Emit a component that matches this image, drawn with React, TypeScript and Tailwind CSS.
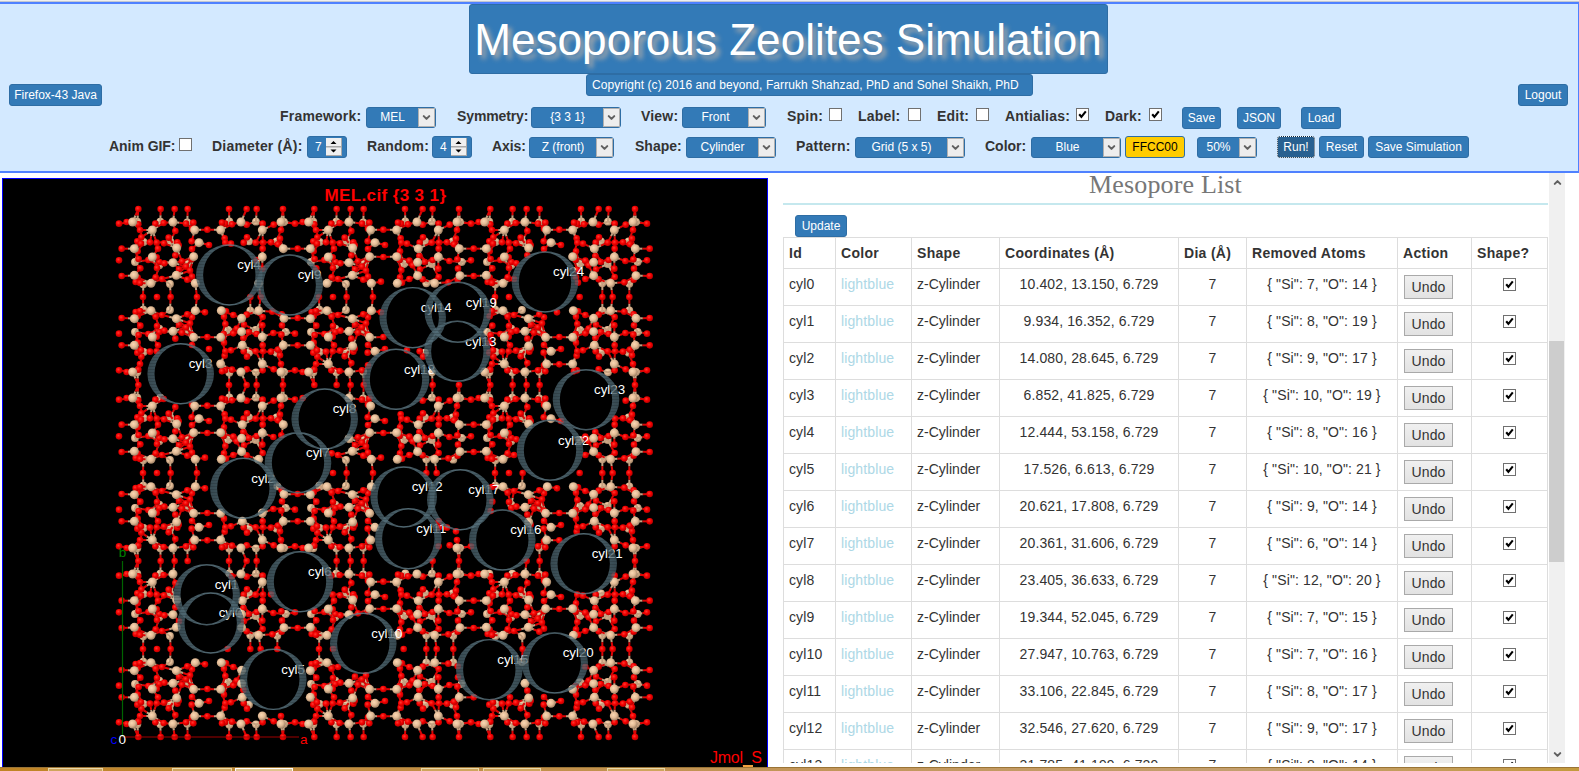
import React from 'react';
import { ChevronDown, ChevronUp } from 'lucide-react';

type Pt = [number, number];

/* ---------- lattice data (three units per screen pixel) ---------- */
const CELL = 528;
const MIRROR_Y = 351;

const siBack: Pt[] = [
  [112, 125], [181, 125], [262, 127], [388, 124], [468, 125], [552, 126],
  [131, 186], [211, 184], [447, 184], [530, 184],
  [178, 256], [262, 252], [384, 252], [467, 252], [557, 246], [105, 246],
  [130, 313], [210, 312], [451, 310], [532, 311],
];
const siFront: Pt[] = [
  [98, 126], [219, 126], [157, 150], [284, 150], [362, 150], [423, 126], [487, 150], [543, 126],
  [297, 188], [103, 206], [230, 204], [427, 206], [550, 206],
  [157, 231], [281, 230], [362, 230], [487, 231],
  [219, 248], [425, 247],
  [103, 286], [229, 286], [425, 287], [552, 287],
  [153, 310], [286, 310], [364, 310], [476, 310],
];
const oxygen: Pt[] = [
  [57, 131], [115, 133], [80, 126], [166, 131], [191, 129], [258, 131], [280, 128],
  [120, 150], [226, 153], [276, 146], [322, 149],
  [375, 131], [396, 133], [366, 128], [440, 134], [488, 131], [521, 134], [543, 150],
  [124, 172], [112, 184], [123, 191], [150, 187], [170, 188], [192, 190], [206, 173], [232, 187], [236, 196],
  [275, 184], [327, 195],
  [374, 175], [376, 188], [393, 191], [441, 172], [431, 188], [467, 188], [489, 188], [513, 187], [540, 176], [534, 193],
  [65, 206], [113, 214], [174, 206], [276, 207], [372, 214], [488, 206],
  [322, 231], [116, 237], [145, 240], [178, 246], [193, 250], [170, 232],
  [57, 241], [246, 244], [275, 238], [226, 226], [258, 260],
  [371, 240], [400, 242], [410, 256], [446, 246], [470, 240], [520, 243], [544, 238], [430, 228],
  [121, 265], [171, 264], [237, 268], [270, 272], [376, 270], [432, 268], [487, 266], [546, 266],
  [65, 288], [113, 293], [167, 292], [186, 297], [276, 290], [262, 299],
  [372, 292], [440, 298], [488, 291], [517, 307], [545, 299], [400, 297],
  [107, 306], [120, 309], [315, 305], [378, 308],
];
const topRow = [115, 182, 224, 263, 387, 440, 470, 549];
const midRow = [129, 171, 212, 291, 383, 451, 482, 532];

const cylinders: [string, number, number][] = [
  ['cyl0', 210.7, 623], ['cyl1', 206.7, 594.7], ['cyl2', 243.3, 488.3], ['cyl3', 180.7, 373.7],
  ['cyl4', 229.3, 275], ['cyl5', 273.3, 679.3], ['cyl6', 300, 581.7], ['cyl7', 298, 462.7],
  ['cyl8', 324.7, 419], ['cyl9', 289.7, 285], ['cyl10', 363.3, 643.3], ['cyl11', 408.3, 538.7],
  ['cyl12', 403.7, 497], ['cyl13', 457.3, 351.3], ['cyl14', 412.7, 317.7], ['cyl15', 489.3, 669.7],
  ['cyl16', 502.3, 540], ['cyl17', 460.3, 499.7], ['cyl18', 396, 379.3], ['cyl19', 457.8, 312.3],
  ['cyl20', 554.7, 663], ['cyl21', 583.7, 563.7], ['cyl22', 550, 450.3], ['cyl23', 586, 399.7],
  ['cyl24', 545, 282],
];

const toX = (u: number) => 100 + u / 3;
const toY = (u: number) => 180 + u / 3;

function expand(points: Pt[]): Pt[] {
  const both = points.concat(points.map(([x, y]) => [x, 2 * MIRROR_Y - y] as Pt));
  const out: Pt[] = [];
  for (let i = 0; i < 3; i++) {
    for (let j = 0; j < 3; j++) {
      both.forEach(([x, y]) => out.push([toX(x + i * CELL), toY(y + j * CELL)]));
    }
  }
  return out;
}

const keep = ([x, y]: Pt) => cylinders.every(([, cx, cy]) => Math.hypot(x - cx, y - cy) > 30.4);

function buildLattice() {
  const ox = expand(oxygen);
  for (let i = 0; i < 3; i++) {
    for (let j = 0; j <= 3; j++) topRow.forEach((x) => ox.push([toX(x + i * CELL), toY(87 + j * CELL)]));
    for (let j = 0; j < 3; j++) midRow.forEach((x) => ox.push([toX(x + i * CELL), toY(351 + j * CELL)]));
  }
  for (let j = 0; j < 3; j++) {
    [131, 206, 241, 288, 414, 461, 496, 571].forEach((y) => {
      const x = y === 131 || y === 241 || y === 461 || y === 571 ? 57 : 65;
      ox.push([toX(x + 3 * CELL), toY(y + j * CELL)]);
    });
  }
  const o = ox.filter(keep);
  const back = expand(siBack).filter(keep);
  const front = expand(siFront).filter(keep);
  const bonds: [Pt, Pt][] = [];
  back.concat(front).forEach((s) => {
    o.map((p) => ({ p, d: Math.hypot(p[0] - s[0], p[1] - s[1]) }))
      .filter((e) => e.d > 3 && e.d < 14.8)
      .sort((a, b) => a.d - b.d)
      .slice(0, 6)
      .forEach((e) => bonds.push([s, e.p]));
  });
  return { o, back, front, bonds };
}

const lattice = buildLattice();

const ring = (cx: number, cy: number) =>
  `M${cx - 33.3} ${cy}a33.3 30.7 0 1 0 66.6 0a33.3 30.7 0 1 0 -66.6 0Z` +
  `M${cx - 26.2} ${cy}a26.2 29.3 0 1 0 52.4 0a26.2 29.3 0 1 0 -52.4 0Z`;

function Viewer() {
  return (
    <svg className="block" width="764" height="588" viewBox="3 179 764 588" fontFamily="Liberation Sans, Arial, sans-serif">
      <defs>
        <radialGradient id="si" cx="0.4" cy="0.38" r="0.68">
          <stop offset="0" stopColor="#fbd8b4" />
          <stop offset="0.5" stopColor="#e2bb96" />
          <stop offset="1" stopColor="#94775c" />
        </radialGradient>
        <radialGradient id="ox" cx="0.4" cy="0.38" r="0.7">
          <stop offset="0" stopColor="#ff3830" />
          <stop offset="0.45" stopColor="#f40000" />
          <stop offset="1" stopColor="#a80000" />
        </radialGradient>
        <linearGradient id="tube" x1="0" x2="1" y1="0" y2="0">
          <stop offset="0" stopColor="#48606a" stopOpacity="0.76" />
          <stop offset="0.5" stopColor="#66838f" stopOpacity="0.8" />
          <stop offset="1" stopColor="#48606a" stopOpacity="0.76" />
        </linearGradient>
        <pattern id="stripe" width="4" height="3" patternUnits="userSpaceOnUse">
          <rect width="4" height="1" fill="#000" opacity="0.14" />
        </pattern>
      </defs>
      <rect x="3" y="179" width="764" height="588" fill="#000" />
      <text x="324.5" y="201.4" fontSize="17" fontWeight="700" fill="#f00" textLength="121.5">MEL.cif {'{3 3 1}'}</text>
      {lattice.back.map(([x, y], i) => <circle key={i} cx={x} cy={y} r="3.9" fill="url(#si)" />)}
      {lattice.bonds.map(([s, p], i) => {
        const mx = (s[0] + p[0]) / 2;
        const my = (s[1] + p[1]) / 2;
        return (
          <g key={i} strokeWidth="2">
            <line x1={s[0]} y1={s[1]} x2={mx} y2={my} stroke="#c4a080" />
            <line x1={mx} y1={my} x2={p[0]} y2={p[1]} stroke="#dc0505" />
          </g>
        );
      })}
      {lattice.o.map(([x, y], i) => <circle key={i} cx={x} cy={y} r="3.3" fill="url(#ox)" />)}
      {lattice.front.map(([x, y], i) => <circle key={i} cx={x} cy={y} r="4.5" fill="url(#si)" />)}
      {cylinders.map(([name, cx, cy]) => (
        <text key={name} x={cx + 8} y={cy - 5.6} fontSize="13.3" fill="#fff">{name}</text>
      ))}
      {cylinders.map(([name, cx, cy]) => (
        <g key={name}>
          <path d={ring(cx, cy)} fillRule="evenodd" fill="url(#tube)" />
          <path d={ring(cx, cy)} fillRule="evenodd" fill="url(#stripe)" />
        </g>
      ))}
      <path d="M122.5 561V737" stroke="#006400" strokeWidth="1.2" />
      <path d="M122.5 737H299" stroke="#a00000" strokeWidth="1.2" />
      <text x="118.7" y="557" fontSize="13.5" fill="#008000">b</text>
      <text x="300" y="744" fontSize="13.5" fill="#f00">a</text>
      <text x="110.5" y="744" fontSize="13.5" fill="#00f">c</text>
      <text x="118.5" y="744" fontSize="13.5" fill="#fff">0</text>
      <text x="710" y="763.2" fontSize="16" fill="#f00" textLength="52">Jmol_S</text>
      <rect x="743" y="765" width="10" height="2" fill="#f0a040" />
    </svg>
  );
}

/* ---------- form controls ---------- */
const Lbl = ({ cls, children }: { cls: string; children: React.ReactNode }) => (
  <span className={`shrink-0 whitespace-nowrap text-[14px] leading-[20px] font-bold tracking-[0.2px] text-[#333] ${cls}`}>{children}</span>
);

const Btn = ({ cls, children }: { cls: string; children: React.ReactNode }) => (
  <button className={`flex h-[22px] shrink-0 items-center justify-center rounded-[3px] border text-[12px] leading-none whitespace-nowrap ${cls}`}>{children}</button>
);
const blue = 'border-[#2e6da4] bg-[#337ab7] text-white';

const Sel = ({ cls, children }: { cls: string; children: React.ReactNode }) => (
  <div className={`flex h-[21px] shrink-0 rounded-[3px] border border-[#2e6da4] bg-[#337ab7] ${cls}`}>
    <span className="flex-1 text-center text-[12px] leading-[19px] whitespace-nowrap text-white">{children}</span>
    <span className="flex w-[17px] items-center justify-center border border-[#b0b0b0] bg-[#ededed]">
      <ChevronDown size={11} strokeWidth={4.5} color="#606060" />
    </span>
  </div>
);

const Num = ({ cls, children }: { cls: string; children: React.ReactNode }) => (
  <div className={`flex h-[22px] w-[40px] shrink-0 items-center rounded-[3px] border border-[#2e6da4] bg-[#337ab7] pl-[7px] ${cls}`}>
    <span className="w-[11px] text-[12px] leading-none text-white">{children}</span>
    <svg width="16" height="18" viewBox="0 0 16 18">
      <rect width="16" height="18" fill="#a9a9a9" />
      <rect width="15" height="8" fill="#f0f0f0" />
      <rect y="9.5" width="15" height="7.5" fill="#f0f0f0" />
      <path d="M4.5 6h6l-3-3zM4.5 11.5h6l-3 3z" fill="#000" />
    </svg>
  </div>
);

const Check = ({ cls = '', on = false }: { cls?: string; on?: boolean }) => (
  <span className={`block h-[13px] w-[13px] shrink-0 border border-[#707070] bg-white ${cls}`}>
    {on && (
      <svg width="11" height="11" viewBox="0 0 11 11">
        <path d="M2.2 5.2L4.4 7.8L8.8 2.4" fill="none" stroke="#000" strokeWidth="2.1" />
      </svg>
    )}
  </span>
);

/* ---------- table ---------- */
const rows: [string, string, string][] = [
  ['cyl0', '10.402, 13.150, 6.729', '{ "Si": 7, "O": 14 }'],
  ['cyl1', '9.934, 16.352, 6.729', '{ "Si": 8, "O": 19 }'],
  ['cyl2', '14.080, 28.645, 6.729', '{ "Si": 9, "O": 17 }'],
  ['cyl3', '6.852, 41.825, 6.729', '{ "Si": 10, "O": 19 }'],
  ['cyl4', '12.444, 53.158, 6.729', '{ "Si": 8, "O": 16 }'],
  ['cyl5', '17.526, 6.613, 6.729', '{ "Si": 10, "O": 21 }'],
  ['cyl6', '20.621, 17.808, 6.729', '{ "Si": 9, "O": 14 }'],
  ['cyl7', '20.361, 31.606, 6.729', '{ "Si": 6, "O": 14 }'],
  ['cyl8', '23.405, 36.633, 6.729', '{ "Si": 12, "O": 20 }'],
  ['cyl9', '19.344, 52.045, 6.729', '{ "Si": 7, "O": 15 }'],
  ['cyl10', '27.947, 10.763, 6.729', '{ "Si": 7, "O": 16 }'],
  ['cyl11', '33.106, 22.845, 6.729', '{ "Si": 8, "O": 17 }'],
  ['cyl12', '32.546, 27.620, 6.729', '{ "Si": 9, "O": 17 }'],
  ['cyl13', '31.785, 41.199, 6.729', '{ "Si": 8, "O": 14 }'],
];
const cols = 'grid grid-cols-[52px_76px_88px_179px_68px_151px_74px_76px]';
const cell = 'border-r border-b border-[#ddd] px-[5px]';

export default function App() {
  return (
    <div className="flex h-[771px] w-[1579px] flex-col overflow-hidden bg-white font-['Liberation_Sans',Arial,sans-serif] text-[#333]">
      <div className="h-[2px] shrink-0 border-b border-[#c4c8d0] bg-[#f0f0f0]" />
      <header className="h-[171px] shrink-0 border-y-2 border-r border-[#4f81ff] bg-[#d3e9ff]">
        <div className="flex h-[102px] items-end justify-between pr-[10px] pl-[9px]">
          <Btn cls={`w-[93px] ${blue}`}>Firefox-43 Java</Btn>
          <div className="mr-[2px] flex h-[102px] w-[639px] flex-col items-center">
            <h1 className="h-[70px] w-[639px] rounded-[3px] border border-[#2e6da4] bg-[#337ab7] text-center text-[44.1px] leading-[69px] whitespace-nowrap text-white [text-shadow:4px_4px_5px_#aaa]">Mesoporous Zeolites Simulation</h1>
            <div className="ml-[43px] h-[22px] w-[447px] rounded-[3px] border border-[#2e6da4] bg-[#337ab7] pl-[5px] text-[12px] leading-[20px] tracking-[0.08px] whitespace-nowrap text-white">Copyright (c) 2016 and beyond, Farrukh Shahzad, PhD and Sohel Shaikh, PhD</div>
          </div>
          <Btn cls={`ml-[42px] w-[50px] ${blue}`}>Logout</Btn>
        </div>
        <div className="mt-px flex h-[22px] pl-[280px]">
          <Lbl cls="w-[86px] -mt-px">Framework:</Lbl>
          <Sel cls="w-[70px]">MEL</Sel>
          <Lbl cls="ml-[21px] w-[74px] -mt-px !tracking-[-0.12px]">Symmetry:</Lbl>
          <Sel cls="w-[90px]">{'{3 3 1}'}</Sel>
          <Lbl cls="ml-[20px] w-[41px] -mt-px">View:</Lbl>
          <Sel cls="w-[84px]">Front</Sel>
          <Lbl cls="ml-[21px] w-[42px] -mt-px">Spin:</Lbl>
          <Check cls="mt-px" />
          <Lbl cls="ml-[16px] w-[50px] -mt-px">Label:</Lbl>
          <Check cls="mt-px" />
          <Lbl cls="ml-[16px] w-[39px] -mt-px">Edit:</Lbl>
          <Check cls="mt-px" />
          <Lbl cls="ml-[16px] w-[71px] -mt-px">Antialias:</Lbl>
          <Check on cls="mt-px" />
          <Lbl cls="ml-[16px] w-[44px] -mt-px">Dark:</Lbl>
          <Check on cls="mt-px" />
          <Btn cls={`ml-[20px] w-[39px] ${blue}`}>Save</Btn>
          <Btn cls={`ml-[16px] w-[44px] ${blue}`}>JSON</Btn>
          <Btn cls={`ml-[20px] w-[40px] ${blue}`}>Load</Btn>
        </div>
        <div className="mt-[7px] flex h-[22px] pl-[109px]">
          <Lbl cls="w-[70px] !tracking-[-0.05px]">Anim GIF:</Lbl>
          <Check cls="mt-[2px]" />
          <Lbl cls="ml-[20px] w-[95px]">Diameter (Å):</Lbl>
          <Num cls="">7</Num>
          <Lbl cls="ml-[20px] w-[65px]">Random:</Lbl>
          <Num cls="">4</Num>
          <Lbl cls="ml-[20px] w-[37px] !tracking-[-0.1px]">Axis:</Lbl>
          <Sel cls="mt-px w-[85px]">Z (front)</Sel>
          <Lbl cls="ml-[21px] w-[51px] !tracking-[0px]">Shape:</Lbl>
          <Sel cls="mt-px w-[90px]">Cylinder</Sel>
          <Lbl cls="ml-[20px] w-[59px]">Pattern:</Lbl>
          <Sel cls="mt-px w-[110px]">Grid (5 x 5)</Sel>
          <Lbl cls="ml-[20px] w-[46px] !tracking-[0px]">Color:</Lbl>
          <Sel cls="mt-px w-[90px]">Blue</Sel>
          <Btn cls="ml-[4px] w-[60px] border-[#2e6da4] bg-[#ffcc00] text-black">FFCC00</Btn>
          <Sel cls="mt-px ml-[12px] w-[60px]">50%</Sel>
          <Btn cls="ml-[20px] w-[38px] border-[#122b40] bg-[#286090] text-white outline-1 -outline-offset-1 outline-dotted outline-white">Run!</Btn>
          <Btn cls={`ml-[4px] w-[45px] ${blue}`}>Reset</Btn>
          <Btn cls={`ml-[4px] w-[101px] ${blue}`}>Save Simulation</Btn>
        </div>
      </header>

      <main className="flex h-[594px] shrink-0 overflow-hidden">
        <section className="mt-[5px] ml-[2px] h-[590px] w-[766px] shrink-0 border border-[#0000ff] bg-black">
          <Viewer />
        </section>
        <section className="ml-[15px] h-[590px] w-[765px] shrink-0 overflow-hidden">
          <h2 className="h-[32px] border-b-2 border-[#c5e8ee] text-center font-['Liberation_Serif',Georgia,serif] text-[26px] leading-[24px] tracking-[0.15px] text-[#777]">Mesopore List</h2>
          <Btn cls={`mt-[10px] ml-[12px] w-[52px] ${blue}`}>Update</Btn>
          <div className="border-t border-l border-[#ddd] text-[14px] tracking-[0.12px]">
            <div className={`${cols} h-[31px] leading-[30px] font-bold tracking-[0.3px]`}>
              {['Id', 'Color', 'Shape', 'Coordinates (Å)', 'Dia (Å)', 'Removed Atoms', 'Action', 'Shape?'].map((h) => (
                <div key={h} className={`${cell} whitespace-nowrap`}>{h}</div>
              ))}
            </div>
            {rows.map(([id, xyz, removed]) => (
              <div key={id} className={`${cols} h-[37px] leading-[31px]`}>
                <div className={cell}>{id}</div>
                <div className={`${cell} text-[#add8e6]`}>lightblue</div>
                <div className={`${cell} tracking-[0.02px]`}>z-Cylinder</div>
                <div className={`${cell} text-center whitespace-pre`}>{xyz}</div>
                <div className={`${cell} text-center`}>7</div>
                <div className={`${cell} text-center whitespace-pre`}>{removed}</div>
                <div className={`${cell} pt-[6px]`}>
                  <button className="ml-px block h-[24px] w-[49px] border border-[#a9a9a9] bg-linear-to-b from-[#f0f0f0] to-[#e2e2e2] text-center text-[14px] leading-[23px]">Undo</button>
                </div>
                <div className={`${cell} pt-[9px] pl-[31px]`}><Check on /></div>
              </div>
            ))}
          </div>
        </section>
        <div className="ml-px flex h-[590px] w-[16px] shrink-0 flex-col items-center bg-[#f0f0f0]">
          <ChevronUp className="mt-[4px] shrink-0" size={11} strokeWidth={4.5} color="#606060" />
          <div className="mt-[153px] mr-px h-[221px] w-[15px] shrink-0 bg-[#cdcdcd]" />
          <ChevronDown className="mt-auto mb-[3px] shrink-0" size={11} strokeWidth={4.5} color="#606060" />
        </div>
      </main>

      <footer className="flex h-[4px] shrink-0 border-t border-[#9a7436] bg-linear-to-r from-[#c08424] via-[#c4a070] via-80% to-[#c49a3c] pl-[48px]">
        <span className="h-[3px] w-[55px] border-x border-t border-[#ead9a8] bg-[#cfa55c]" />
        <span className="ml-[69px] h-[3px] w-[60px] border-x border-t border-[#ead9a8] bg-[#cfa55c]" />
        <span className="ml-[3px] h-[3px] w-[58px] border-x border-t border-white bg-[#e0c48c]" />
        <span className="ml-[128px] h-[3px] w-[58px] border-x border-t border-[#ead9a8] bg-[#cfa55c]" />
        <span className="ml-[4px] h-[3px] w-[58px] border-x border-t border-[#ead9a8] bg-[#cfa55c]" />
        <span className="ml-[66px] h-[3px] w-[58px] border-x border-t border-[#ead9a8] bg-[#cfa55c]" />
      </footer>
    </div>
  );
}
